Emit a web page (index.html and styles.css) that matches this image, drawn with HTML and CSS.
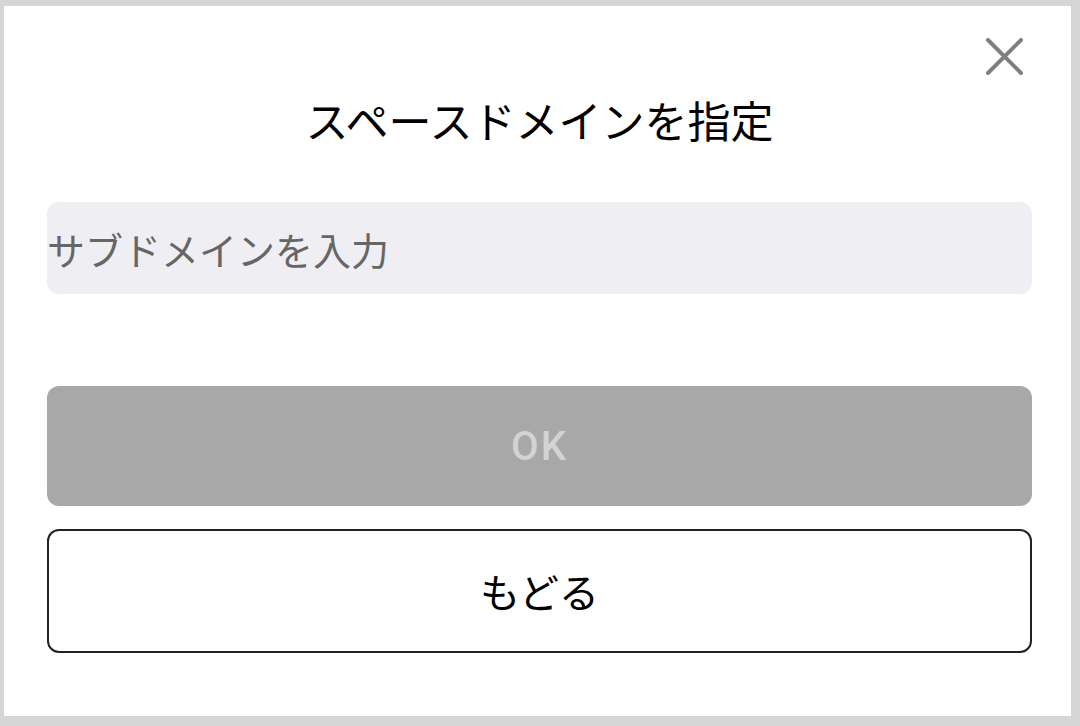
FILE: index.html
```html
<!DOCTYPE html>
<html lang="ja">
<head>
<meta charset="utf-8">
<link rel="stylesheet" href="styles.css">
</head>
<body>
<div class="panel">
  <button class="close" aria-label="閉じる">
    <svg width="37" height="37" viewBox="0 0 37 37"><path d="M2 2 L35 35 M35 2 L2 35" stroke="#7f7f7f" stroke-width="4" stroke-linecap="round" fill="none"/></svg>
  </button>
  <h1 class="title">スペースドメインを指定</h1>
  <div class="field"><input class="input" type="text" placeholder="サブドメインを入力"></div>
  <button class="btn btn-ok" disabled>OK</button>
  <button class="btn btn-back">もどる</button>
</div>
</body>
</html>
```
FILE: styles.css
```css
html, body {
  margin: 0;
  padding: 0;
  background: #d6d6d6;
  font-family: "Noto Sans CJK JP", "Noto Sans", sans-serif;
}
.panel {
  position: relative;
  box-sizing: border-box;
  width: 1067px;
  height: 710px;
  margin: 6px 0 0 4px;
  background: #fff;
  padding: 82px 39px 0 43px;
  display: flex;
  flex-direction: column;
}
.close {
  position: absolute;
  top: 32px;
  right: 48px;
  width: 37px;
  height: 37px;
  padding: 0;
  border: 0;
  background: none;
  display: flex;
}
.title {
  margin: 0;
  height: 62px;
  line-height: 62px;
  font-size: 43px;
  font-weight: 400;
  text-align: center;
  color: #000;
}
.field {
  margin-top: 52px;
  height: 92px;
  background: #efeef3;
  border-radius: 12px;
  display: flex;
}
.input {
  flex: 1;
  border: 0;
  background: transparent;
  padding: 0;
  margin: 0;
  font-family: inherit;
  font-size: 38px;
  color: #000;
  outline: none;
}
.input::placeholder {
  color: #666;
}
.btn {
  box-sizing: border-box;
  font-family: inherit;
  border-radius: 12px;
  width: 100%;
}
.btn-ok {
  margin-top: 92px;
  height: 120px;
  background: #a8a8a8;
  border: 0;
  color: #d3d3d3;
  font-family: Roboto, "Noto Sans", sans-serif;
  font-size: 40px;
  font-weight: 500;
  letter-spacing: 2px;
}
.btn-back {
  margin-top: 23px;
  height: 124px;
  background: #fff;
  border: 2px solid #222;
  color: #000;
  font-size: 40px;
}
```
